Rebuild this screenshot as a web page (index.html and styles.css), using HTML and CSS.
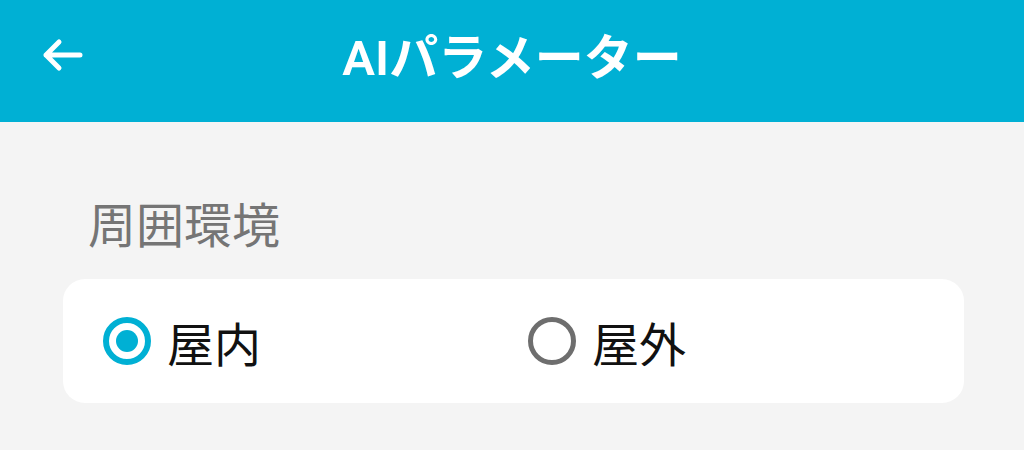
FILE: index.html
```html
<!DOCTYPE html>
<html lang="ja">
<head>
  <meta charset="UTF-8">
  <title>AIパラメーター</title>
  <link rel="stylesheet" href="styles.css">
</head>
<body>
  <header class="topbar">
    <button class="back-btn" aria-label="戻る">
      <svg width="44" height="36" viewBox="0 0 44 36">
        <path d="M40 18H6M19 5L6 18l13 13" fill="none" stroke="#fff" stroke-width="5" stroke-linecap="round" stroke-linejoin="round"/>
      </svg>
    </button>
    <h1 class="title">AIパラメーター</h1>
  </header>

  <main class="content">
    <div class="section-label">周囲環境</div>
    <div class="card">
      <label class="option">
        <span class="radio checked"></span>
        <span class="option-text">屋内</span>
      </label>
      <label class="option">
        <span class="radio"></span>
        <span class="option-text">屋外</span>
      </label>
    </div>
  </main>
</body>
</html>
```

FILE: styles.css
```css
body {
  margin: 0;
  background: #f4f4f4;
  font-family: "Noto Sans CJK JP", "Noto Sans", sans-serif;
  width: 1024px;
  height: 450px;
  overflow: hidden;
}
.topbar {
  height: 122px;
  background: #00b0d4;
  display: flex;
  align-items: center;
  justify-content: center;
  position: relative;
}
.back-btn {
  position: absolute;
  left: 40px;
  top: 37px;
  background: none;
  border: none;
  padding: 0;
  line-height: 0;
}
.title {
  margin: 0 0 6px;
  color: #fff;
  font-size: 49px;
  line-height: 1;
  font-weight: 600;
  font-family: Roboto, "Noto Sans CJK JP", sans-serif;
}
.content {
  padding: 76px 60px 0 63px;
}
.section-label {
  color: #757575;
  font-size: 48px;
  line-height: 48px;
  padding-left: 25px;
  margin-bottom: 33px;
}
.card {
  width: 901px;
  height: 124px;
  box-sizing: border-box;
  background: #fff;
  border-radius: 22px;
  display: grid;
  grid-template-columns: 425px 1fr;
  align-items: center;
  padding-left: 40px;
}
.option {
  display: flex;
  align-items: center;
  gap: 16px;
}
.radio {
  width: 48px;
  height: 48px;
  box-sizing: border-box;
  border-radius: 50%;
  border: 5px solid #6e6e6e;
  display: flex;
  align-items: center;
  justify-content: center;
}
.radio.checked {
  border: 6px solid #00b0d4;
}
.radio.checked::after {
  content: "";
  width: 22px;
  height: 22px;
  border-radius: 50%;
  background: #00b0d4;
}
.option-text {
  font-size: 47px;
  line-height: 1;
  color: #111;
}
```
